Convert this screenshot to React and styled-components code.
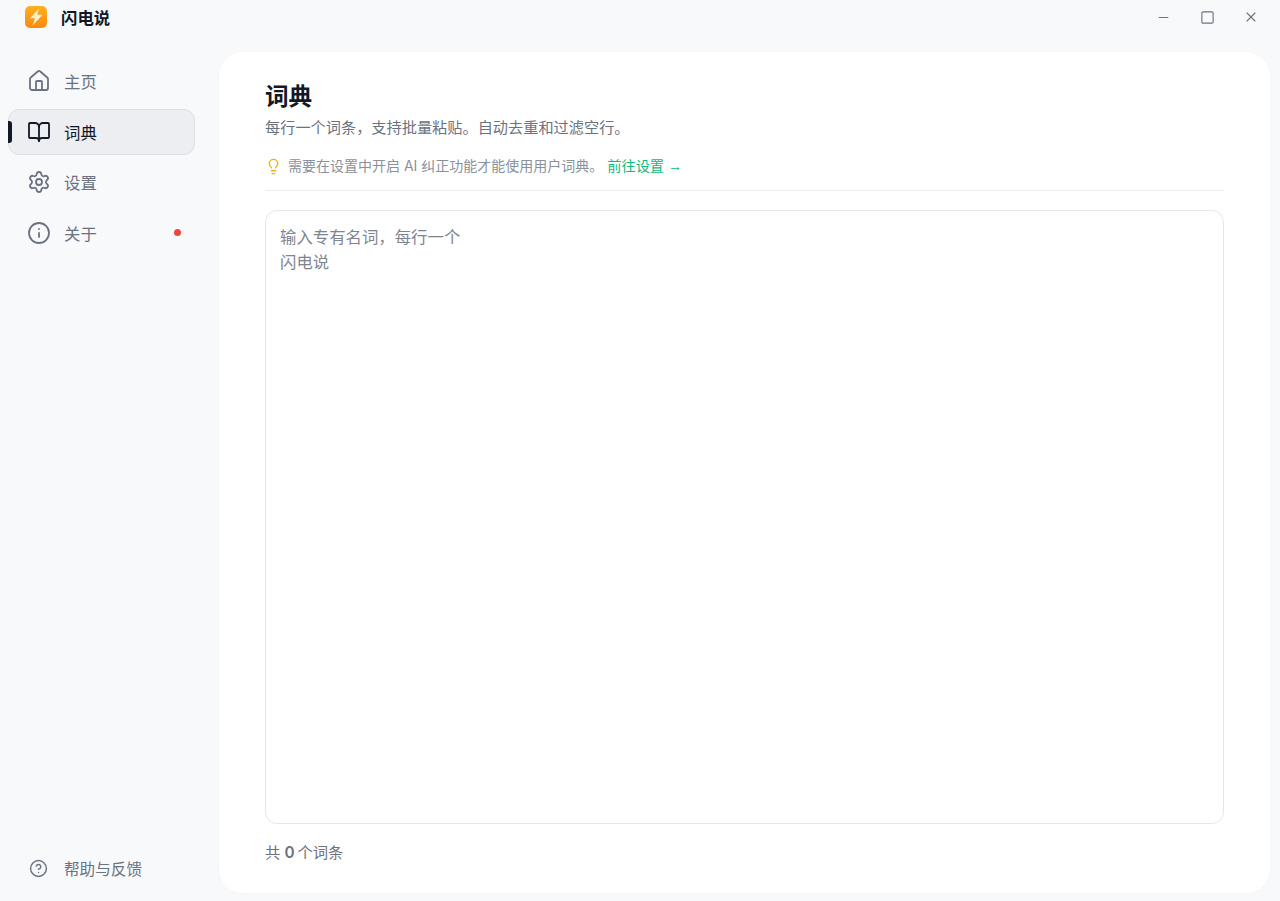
import React from "react";
import styled, { createGlobalStyle } from "styled-components";
import { House, BookOpen, Settings, Info, CircleHelp, Lightbulb, Minus, Square, X } from "lucide-react";

const FONT = `Inter, "Noto Sans CJK SC", "Noto Sans", sans-serif`;

const Global = createGlobalStyle`
  html, body { margin: 0; padding: 0; height: 100%; background: #f8f9fb; }
  * { box-sizing: border-box; }
  body { font-family: ${FONT}; overflow: hidden; }
`;

const Shell = styled.div`
  width: 1280px;
  height: 901px;
  display: grid;
  grid-template-columns: 219px 1fr;
  grid-template-rows: 52px 1fr;
  padding-right: 10px;
  padding-bottom: 8px;
  background: #f8f9fb;
`;

const TitleBar = styled.header`
  grid-column: 1 / 3;
  display: flex;
  align-items: flex-start;
  justify-content: space-between;
  margin-right: -10px;
`;

const Brand = styled.div`
  display: flex;
  align-items: center;
  height: 36px;
  padding-left: 25px;
  gap: 14px;
  margin-top: -1px;
`;

const BrandName = styled.span`
  font-size: 16.4px;
  font-weight: 700;
  color: #111827;
`;

const WindowControls = styled.div`
  display: flex;
  height: 34px;
  align-items: center;
  padding-right: 7px;
`;

const WindowButton = styled.button`
  width: 44px;
  height: 34px;
  border: 0;
  padding: 0;
  background: none;
  color: #6b7280;
  display: flex;
  align-items: center;
  justify-content: center;
`;

const Sidebar = styled.nav`
  display: flex;
  flex-direction: column;
  padding: 6px 24px 0 8px;
`;

const NavList = styled.div`
  display: flex;
  flex-direction: column;
  gap: 4.5px;
  flex: 1;
`;

const NavItem = styled.div`
  position: relative;
  height: 46px;
  display: flex;
  align-items: center;
  padding-left: 17.5px;
  gap: 13.5px;
  border-radius: 11px;
  font-size: 16.4px;
  color: ${(p) => (p.$active ? "#111827" : "#6b7280")};
  background: ${(p) => (p.$active ? "#eceef1" : "transparent")};
  border: 1px solid ${(p) => (p.$active ? "#dcdfe3" : "transparent")};
`;

const ActiveMark = styled.span`
  position: absolute;
  left: -1px;
  top: 11px;
  width: 4px;
  height: 22px;
  border-radius: 0 3px 3px 0;
  background: #111827;
`;

const Dot = styled.span`
  position: absolute;
  right: 13px;
  top: 50%;
  width: 7px;
  height: 7px;
  margin-top: -3.5px;
  border-radius: 50%;
  background: #ef4444;
`;

const HelpItem = styled(NavItem)`
  margin-bottom: 2px;
  font-size: 15.6px;
  gap: 16px;
  padding-left: 20px;
`;

const Panel = styled.main`
  background: #fff;
  border-radius: 24px;
  padding: 27px 46px 0;
  display: flex;
  flex-direction: column;
  box-shadow: 0 0 2px rgba(17, 24, 39, 0.03);
`;

const Title = styled.h1`
  margin: 0;
  font-size: 23.6px;
  line-height: 36px;
  font-weight: 700;
  color: #111827;
`;

const Subtitle = styled.p`
  margin: 2px 0 0;
  font-size: 15.2px;
  line-height: 22px;
  color: #6b7280;
`;

const Hint = styled.div`
  display: flex;
  align-items: center;
  margin-top: 16px;
  padding-bottom: 13px;
  border-bottom: 1px solid #e9ebee;
  font-size: 14px;
  line-height: 22px;
`;

const HintIcon = styled(Lightbulb)`
  margin: 0 6.5px 0 -0.5px;
`;

const HintText = styled.span`
  color: #8b919b;
`;

const HintLink = styled.a`
  color: #10b981;
  margin-left: 4px;
  font-size: 14.2px;
`;

const Arrow = styled.span`
  font-family: "Liberation Sans", sans-serif;
`;

const Editor = styled.div`
  margin-top: 19px;
  flex: 1;
  border: 1px solid #e5e7eb;
  border-radius: 12px;
  padding: 14px;
  font-size: 16.4px;
  line-height: 25px;
  color: #7f858f;
`;

const Footer = styled.div`
  padding: 18px 0 29px;
  font-size: 15.3px;
  line-height: 22px;
  color: #6b7280;
`;

const Count = styled.b`
  font-weight: 600;
  margin-right: -1.5px;
`;

const Logo = () => (
  <svg width="22" height="22" viewBox="0 0 22 22">
    <defs>
      <linearGradient id="lg" x1="0" y1="0" x2="0" y2="1">
        <stop offset="0" stopColor="#fdb022" />
        <stop offset="1" stopColor="#f98a0f" />
      </linearGradient>
    </defs>
    <rect width="22" height="22" rx="5" fill="url(#lg)" />
    <path d="M14 2.5 5 12.2h5L7.6 19.5 17.5 8.8h-5.4z" fill="#fff2c8" />
  </svg>
);

const items = [
  { label: "主页", Icon: House },
  { label: "词典", Icon: BookOpen, active: true },
  { label: "设置", Icon: Settings },
  { label: "关于", Icon: Info, dot: true },
];

export default function App() {
  return (
    <>
      <Global />
      <Shell>
        <TitleBar>
          <Brand>
            <Logo />
            <BrandName>闪电说</BrandName>
          </Brand>
          <WindowControls>
            <WindowButton><Minus size={15} strokeWidth={1.7} /></WindowButton>
            <WindowButton><Square size={15} strokeWidth={1.8} /></WindowButton>
            <WindowButton><X size={16} strokeWidth={1.7} /></WindowButton>
          </WindowControls>
        </TitleBar>
        <Sidebar>
          <NavList>
            {items.map(({ label, Icon, active, dot }) => (
              <NavItem key={label} $active={active}>
                {active && <ActiveMark />}
                <Icon size={24} strokeWidth={1.8} color={active ? "#111827" : "#6b7280"} />
                {label}
                {dot && <Dot />}
              </NavItem>
            ))}
          </NavList>
          <HelpItem>
            <CircleHelp size={19} strokeWidth={1.8} color="#6b7280" />
            帮助与反馈
          </HelpItem>
        </Sidebar>
        <Panel>
          <Title>词典</Title>
          <Subtitle>每行一个词条，支持批量粘贴。自动去重和过滤空行。</Subtitle>
          <Hint>
            <HintIcon size={17} strokeWidth={1.8} color="#eab308" />
            <HintText>需要在设置中开启 AI 纠正功能才能使用用户词典。</HintText>
            <HintLink>前往设置 <Arrow>→</Arrow></HintLink>
          </Hint>
          <Editor>
            输入专有名词，每行一个
            <br />
            闪电说
          </Editor>
          <Footer>
            共 <Count>0</Count> 个词条
          </Footer>
        </Panel>
      </Shell>
    </>
  );
}
